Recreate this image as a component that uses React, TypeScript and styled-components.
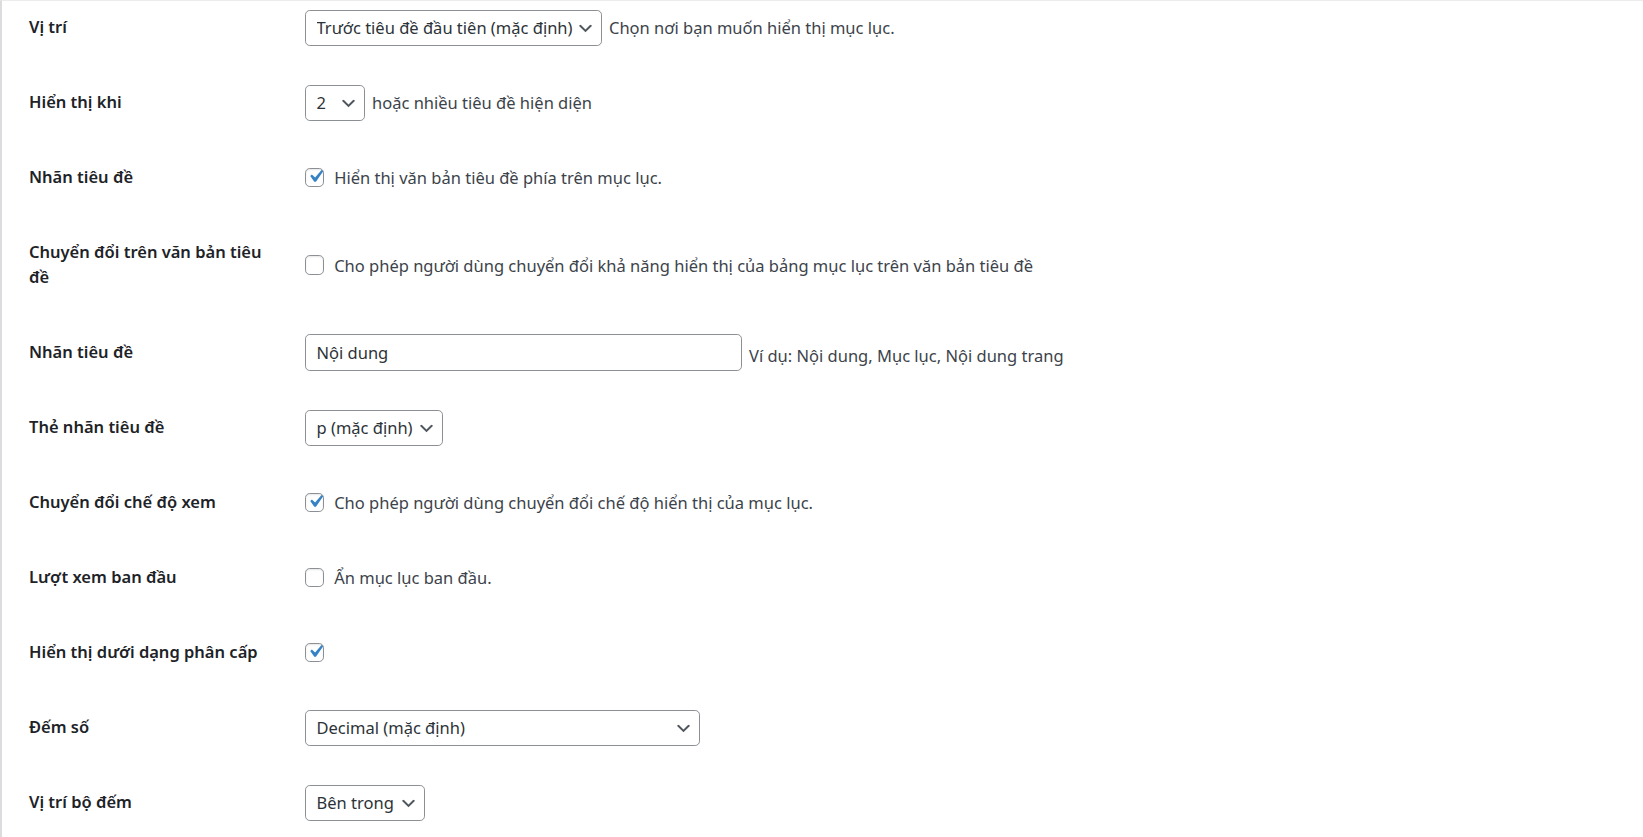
import React from 'react';
import styled, { createGlobalStyle } from 'styled-components';

const GlobalStyle = createGlobalStyle`
  html, body {
    margin: 0;
    padding: 0;
    background: #ffffff;
  }

  body {
    font-family: 'Noto Sans', 'Open Sans', sans-serif;
    font-size: 16.5px;
    color: #3c434a;
  }
`;

type Field =
  | { kind: 'select'; value: string; width: number; note?: string }
  | { kind: 'checkbox'; checked: boolean; note?: string }
  | { kind: 'text'; value: string; width: number; note?: string };

interface IOption {
  label: string;
  field: Field;
  tall?: boolean;
}

const OPTIONS: IOption[] = [
  {
    label: 'Vị trí',
    field: {
      kind: 'select',
      value: 'Trước tiêu đề đầu tiên (mặc định)',
      width: 297,
      note: 'Chọn nơi bạn muốn hiển thị mục lục.',
    },
  },
  {
    label: 'Hiển thị khi',
    field: { kind: 'select', value: '2', width: 60, note: 'hoặc nhiều tiêu đề hiện diện' },
  },
  {
    label: 'Nhãn tiêu đề',
    field: { kind: 'checkbox', checked: true, note: 'Hiển thị văn bản tiêu đề phía trên mục lục.' },
  },
  {
    label: 'Chuyển đổi trên văn bản tiêu đề',
    tall: true,
    field: {
      kind: 'checkbox',
      checked: false,
      note: 'Cho phép người dùng chuyển đổi khả năng hiển thị của bảng mục lục trên văn bản tiêu đề',
    },
  },
  {
    label: 'Nhãn tiêu đề',
    field: { kind: 'text', value: 'Nội dung', width: 437, note: 'Ví dụ: Nội dung, Mục lục, Nội dung trang' },
  },
  {
    label: 'Thẻ nhãn tiêu đề',
    field: { kind: 'select', value: 'p (mặc định)', width: 138 },
  },
  {
    label: 'Chuyển đổi chế độ xem',
    field: { kind: 'checkbox', checked: true, note: 'Cho phép người dùng chuyển đổi chế độ hiển thị của mục lục.' },
  },
  {
    label: 'Lượt xem ban đầu',
    field: { kind: 'checkbox', checked: false, note: 'Ẩn mục lục ban đầu.' },
  },
  {
    label: 'Hiển thị dưới dạng phân cấp',
    field: { kind: 'checkbox', checked: true },
  },
  {
    label: 'Đếm số',
    field: { kind: 'select', value: 'Decimal (mặc định)', width: 395 },
  },
  {
    label: 'Vị trí bộ đếm',
    field: { kind: 'select', value: 'Bên trong', width: 120 },
  },
];

const Chevron = () => (
  <ChevronSvg viewBox="0 0 20 20" aria-hidden="true">
    <path d="M5 6l5 5 5-5 2 1-7 7-7-7 2-1z" />
  </ChevronSvg>
);

const CheckMark = () => (
  <CheckSvg viewBox="0 0 20 20" aria-hidden="true">
    <path d="M14.83 4.89l1.34.94-5.81 8.38H9.02L5.78 9.67l1.34-1.25 2.57 2.4z" />
  </CheckSvg>
);

const FieldControl: React.FC<{ field: Field }> = ({ field }) => {
  if (field.kind === 'checkbox') {
    return (
      <CheckLabel>
        <CheckBox checked={field.checked}>{field.checked && <CheckMark />}</CheckBox>
        {field.note && <span>{field.note}</span>}
      </CheckLabel>
    );
  }

  if (field.kind === 'text') {
    return (
      <Inline>
        <TextInput style={{ width: field.width }} defaultValue={field.value} readOnly />
        {field.note && <Note lowered>{field.note}</Note>}
      </Inline>
    );
  }

  return (
    <Inline>
      <SelectBox style={{ width: field.width }}>
        <SelectValue>{field.value}</SelectValue>
        <Chevron />
      </SelectBox>
      {field.note && <Note>{field.note}</Note>}
    </Inline>
  );
};

const App: React.FC = () => {
  return (
    <>
      <GlobalStyle />
      <Panel>
        <FormTable>
          {OPTIONS.map((option, i) => (
            <Row key={i} tall={option.tall}>
              <Label>{option.label}</Label>
              <Cell>
                <FieldControl field={option.field} />
              </Cell>
            </Row>
          ))}
        </FormTable>
      </Panel>
    </>
  );
};

export default App;

const Panel = styled.div`
  height: 837px;
  box-sizing: border-box;
  border-top: 1px solid #ececec;
  border-left: 2px solid #dcdcde;
  overflow: hidden;
`;

const FormTable = styled.div`
  display: flex;
  flex-direction: column;
  margin-top: -11px;
  padding-left: 27px;
`;

const Row = styled.div<{ tall?: boolean }>`
  display: grid;
  grid-template-columns: 276px 1fr;
  height: ${({ tall }) => (tall ? '100px' : '75px')};
  flex-shrink: 0;
`;

const Label = styled.div`
  align-self: start;
  width: 244px;
  padding-top: 24px;
  color: #1d2327;
  font-weight: 600;
  line-height: 25px;
`;

const Cell = styled.div`
  align-self: center;
  display: flex;
  align-items: center;
`;

const Inline = styled.div`
  display: flex;
  align-items: center;
  gap: 7px;
`;

const Note = styled.span<{ lowered?: boolean }>`
  color: #3c434a;
  white-space: nowrap;
  padding-top: ${({ lowered }) => (lowered ? '6px' : '0')};
`;

const SelectBox = styled.div`
  display: flex;
  align-items: center;
  justify-content: space-between;
  box-sizing: border-box;
  height: 36px;
  padding: 0 6px 0 10.5px;
  border: 1.2px solid #8c8f94;
  border-radius: 4.8px;
  background: #ffffff;
  color: #2c3338;
  white-space: nowrap;
`;

const SelectValue = styled.span`
  overflow: hidden;
`;

const ChevronSvg = styled.svg`
  flex-shrink: 0;
  width: 19px;
  height: 19px;
  margin-top: 2px;
  fill: #50575e;
`;

const TextInput = styled.input`
  box-sizing: border-box;
  height: 36.7px;
  margin: 0;
  padding: 0 10.5px;
  border: 1.2px solid #8c8f94;
  border-radius: 4.8px;
  background: #ffffff;
  color: #2c3338;
  font-family: inherit;
  font-size: 16.5px;
  outline: none;
`;

const CheckLabel = styled.label`
  display: flex;
  align-items: center;
  gap: 10px;
  color: #3c434a;
  white-space: nowrap;
`;

const CheckBox = styled.span<{ checked: boolean }>`
  display: flex;
  align-items: center;
  justify-content: center;
  box-sizing: border-box;
  width: 19.2px;
  height: 19.2px;
  border: 1.2px solid #8c8f94;
  border-radius: 4.8px;
  background: #ffffff;
  box-shadow: inset 0 1px 2px rgba(0, 0, 0, 0.1);
  flex-shrink: 0;
`;

const CheckSvg = styled.svg`
  width: 25px;
  height: 25px;
  margin: -3px -4px 0 -3px;
  fill: #3582c4;
  flex-shrink: 0;
`;
